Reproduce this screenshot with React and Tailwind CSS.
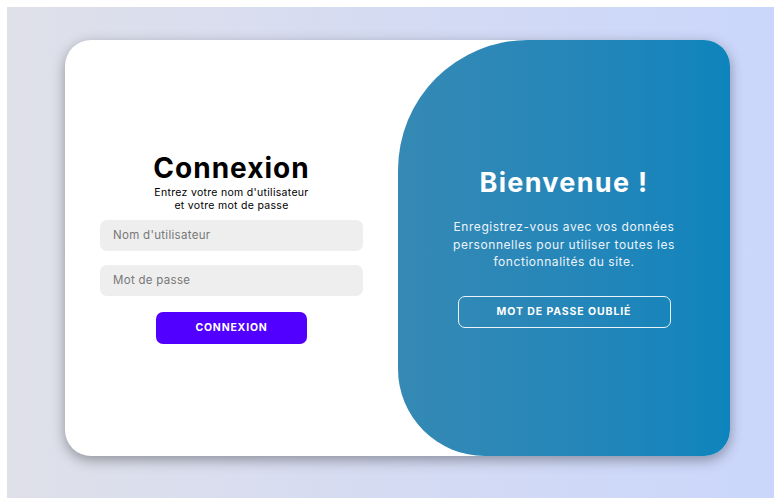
import React, { useState } from "react";

const LoginCard = () => {
  const [username, setUsername] = useState(""); // username field
  const [password, setPassword] = useState(""); // password field

  const handleSubmit = (e) => {
    e.preventDefault();
  };

  return (
    <div className="w-[665px] h-[416px] flex bg-white rounded-[26px] overflow-hidden shadow-[0_4px_13px_rgba(0,0,0,0.35)]">
      {/* Sign in form */}
      <form
        onSubmit={handleSubmit}
        className="w-[333px] flex flex-col items-center justify-center px-[35px]"
      >
        <h1 className="text-[28px] leading-[30px] font-bold text-black tracking-[1px]">Connexion</h1>
        <p className="mt-[3px] text-[10.5px] leading-[13px] text-black text-center tracking-[0.3px]">
          Entrez votre nom d'utilisateur
          <br />
          et votre mot de passe
        </p>

        <input
          type="text"
          value={username}
          onChange={(e) => setUsername(e.target.value)}
          placeholder="Nom d'utilisateur"
          className="mt-[8px] w-full h-[31px] rounded-[7px] bg-[#eeeeee] px-[13px] text-[11.5px] tracking-[0.3px] text-black placeholder:text-[#777777] outline-none"
        />
        <input
          type="password"
          value={password}
          onChange={(e) => setPassword(e.target.value)}
          placeholder="Mot de passe"
          className="mt-[14px] w-full h-[31px] rounded-[7px] bg-[#eeeeee] px-[13px] text-[11.5px] tracking-[0.3px] text-black placeholder:text-[#777777] outline-none"
        />

        <button
          type="submit"
          className="mt-[16px] w-[151px] h-[32px] rounded-[7px] bg-[#5100ff] text-white text-[10.5px] font-bold tracking-[0.8px]"
        >
          CONNEXION
        </button>
      </form>

      {/* Welcome panel */}
      <div className="flex-1 flex flex-col items-center justify-center px-[30px] text-white text-center rounded-[130px_0_0_87px] bg-gradient-to-r from-[#3589b4] to-[#0d84bd]">
        <h2 className="text-[27px] leading-[30px] font-bold tracking-[1.3px]">Bienvenue !</h2>
        <p className="mt-[20px] text-[12px] leading-[17.5px] tracking-[0.55px] text-[#eef4f8]">
          Enregistrez-vous avec vos données
          <br />
          personnelles pour utiliser toutes les
          <br />
          fonctionnalités du site.
        </p>
        <button
          type="button"
          className="mt-[25px] w-[213px] h-[32px] rounded-[7px] border border-white/90 text-white text-[10.5px] font-bold tracking-[0.9px]"
        >
          MOT DE PASSE OUBLIÉ
        </button>
      </div>
    </div>
  );
};

export default function App() {
  return (
    <div className="w-full h-[498px] bg-white pt-[7px] pl-[7px] overflow-hidden font-['Inter',sans-serif]">
      <div className="h-full bg-gradient-to-r from-[#dfe0e9] to-[#cad6fb] pl-[58px] pt-[33px]">
        <LoginCard />
      </div>
    </div>
  );
}
